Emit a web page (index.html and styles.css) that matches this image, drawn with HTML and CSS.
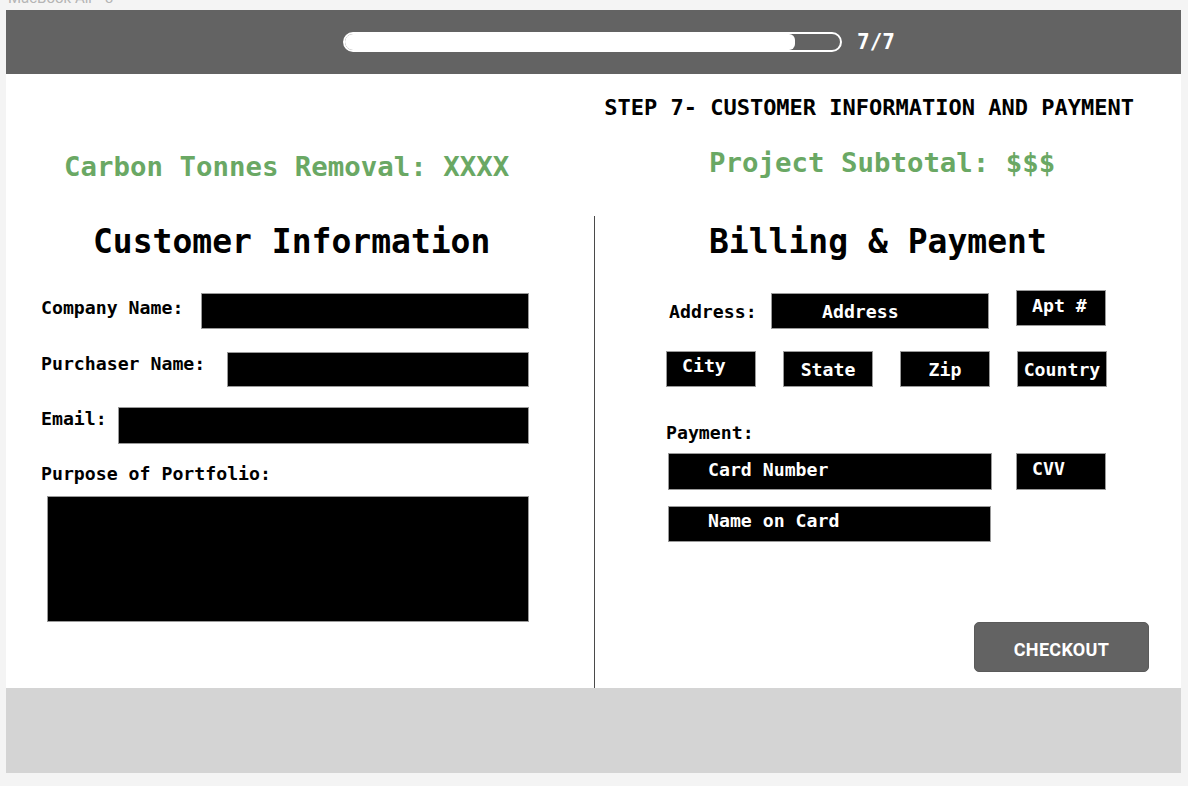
FILE: index.html
```html
<!DOCTYPE html>
<html lang="en">
<head>
<meta charset="utf-8">
<title>Step 7 - Customer Information and Payment</title>
<link rel="stylesheet" href="styles.css">
</head>
<body>
  <div class="frame-label"><span>MacBook Air - 3</span></div>
  <div class="frame">
    <header class="topbar">
      <div class="progress">
        <div class="progress-track"><div class="progress-fill"></div></div>
        <span class="progress-count">7/7</span>
      </div>
    </header>

    <main class="main">
      <h1 class="step-title">STEP 7- CUSTOMER INFORMATION AND PAYMENT</h1>
      <div class="cols">
        <div class="summary summary--left">Carbon Tonnes Removal: XXXX</div>
        <div class="summary summary--right">Project Subtotal: $$$</div>

        <section class="panel panel--customer">
          <h2 class="panel-title">Customer Information</h2>
          <div class="field field--company">
            <span class="label">Company Name:</span>
            <div class="box box--wide"></div>
          </div>
          <div class="field field--purchaser">
            <span class="label">Purchaser Name:</span>
            <div class="box box--wide"></div>
          </div>
          <div class="field field--email">
            <span class="label">Email:</span>
            <div class="box box--wide"></div>
          </div>
          <div class="label label--block">Purpose of Portfolio:</div>
          <div class="box box--area"></div>
        </section>

        <section class="panel panel--billing">
          <h2 class="panel-title">Billing &amp; Payment</h2>
          <div class="addr-row">
            <span class="label label--addr">Address:</span>
            <div class="box box--address">Address</div>
            <div class="box box--small box--top">Apt #</div>
          </div>
          <div class="loc-row">
            <div class="box box--small box--top">City</div>
            <div class="box box--small box--center">State</div>
            <div class="box box--small box--center">Zip</div>
            <div class="box box--small box--center">Country</div>
          </div>
          <div class="label label--payment">Payment:</div>
          <div class="card-row">
            <div class="box box--card">Card Number</div>
            <div class="box box--small box--top box--cvv">CVV</div>
          </div>
          <div class="box box--card box--name">Name on Card</div>
          <button class="checkout" type="button">CHECKOUT</button>
        </section>
      </div>
    </main>

    <footer class="footer"></footer>
  </div>
</body>
</html>
```

FILE: styles.css
```css
* { box-sizing: border-box; }

html, body {
  margin: 0;
  padding: 0;
}

body {
  background: #f4f4f4;
  font-family: "DejaVu Sans Mono", "Liberation Mono", monospace;
  color: #000;
  width: 1188px;
  height: 786px;
  overflow: hidden;
}

.frame-label {
  height: 10px;
  overflow: hidden;
  padding-left: 8px;
  color: #b5b5b5;
  font-family: "Roboto", "Liberation Sans", sans-serif;
  font-size: 15px;
  line-height: 15px;
}

.frame-label span {
  display: block;
  margin-top: -9px;
}

.frame {
  margin-left: 6px;
  width: 1175px;
  display: flex;
  flex-direction: column;
}

/* top bar */
.topbar {
  height: 64px;
  background: #636363;
  display: flex;
  align-items: center;
  padding-left: 337px;
}

.progress {
  display: flex;
  align-items: center;
  gap: 15px;
}

.progress-track {
  width: 499px;
  height: 20px;
  border: 2px solid #fff;
  border-radius: 10px;
  overflow: hidden;
}

.progress-fill {
  width: 91%;
  height: 100%;
  background: #fff;
  border-radius: 0 6px 6px 0;
}

.progress-count {
  color: #fff;
  font-weight: bold;
  font-size: 21px;
  line-height: 24px;
  letter-spacing: 0;
}

/* main */
.main {
  height: 614px;
  background: #fff;
  display: flex;
  flex-direction: column;
}

.step-title {
  margin: 21px 47px 0 0;
  text-align: right;
  font-size: 22px;
  line-height: 26px;
  font-weight: bold;
}

.cols {
  flex: 1;
  display: grid;
  grid-template-columns: 588px 1fr;
  grid-template-rows: 95px 1fr;
}

.summary {
  color: #6aa864;
  font-weight: bold;
  font-size: 27.4px;
  line-height: 34px;
}

.summary--left {
  padding: 29px 0 0 58px;
}

.summary--right {
  padding: 25px 0 0 115px;
}

.panel {
  display: flex;
  flex-direction: column;
  align-items: flex-start;
}

.panel-title {
  margin: 6px 0 0;
  font-size: 33px;
  line-height: 40px;
  font-weight: bold;
}

.label {
  font-weight: bold;
  font-size: 18.2px;
  line-height: 22px;
  white-space: nowrap;
}

.box {
  background: #000;
  border: 1px solid #9a9a9a;
  color: #fff;
  font-weight: bold;
  font-size: 18.2px;
  line-height: 22px;
  white-space: nowrap;
}

/* customer panel */
.panel--customer {
  padding: 0 65px 0 35px;
}

.panel--customer .panel-title {
  margin-left: 52px;
  margin-bottom: 31px;
}

.field {
  display: flex;
  align-items: flex-start;
  width: 100%;
}

.field .label {
  padding-top: 4px;
}

.box--wide {
  flex: 1;
  height: 36px;
}

.field--company .box { margin-left: 18px; }

.field--purchaser { margin-top: 23px; }
.field--purchaser .label { padding-top: 1px; }
.field--purchaser .box { margin-left: 22px; height: 35px; }

.field--email { margin-top: 20px; }
.field--email .label { padding-top: 1px; }
.field--email .box { margin-left: 11px; height: 37px; }

.label--block {
  margin-top: 19px;
}

.box--area {
  margin: 11px 0 0 6px;
  width: 482px;
  height: 126px;
}

/* billing panel */
.panel--billing {
  border-left: 1.5px solid #4a4a4a;
  padding-left: 71px;
}

.panel--billing .panel-title {
  margin-left: 43px;
  margin-bottom: 28px;
}

.addr-row {
  display: flex;
  align-items: flex-start;
}

.label--addr {
  margin: 11px 0 0 3px;
  width: 102px;
}

.box--address {
  margin-top: 3px;
  width: 218px;
  height: 36px;
  display: flex;
  align-items: center;
  padding: 2px 0 0 50px;
}

.box--small {
  width: 90px;
  height: 36px;
}

.addr-row .box--small {
  margin-left: 27px;
}

.box--top {
  padding: 4px 0 0 15px;
}

.box--center {
  display: flex;
  align-items: center;
  justify-content: center;
  padding-top: 1px;
}

.loc-row {
  margin-top: 22px;
  display: flex;
  gap: 27px;
}

.loc-row .box--top {
  padding-top: 3px;
}

.label--payment {
  margin-top: 35px;
}

.card-row {
  margin-top: 9px;
  display: flex;
  align-items: flex-start;
}

.box--card {
  margin-left: 2px;
  width: 324px;
  height: 37px;
  padding: 5px 0 0 39px;
}

.box--cvv {
  margin-left: 24px;
  height: 37px;
}

.box--name {
  margin-top: 16px;
  width: 323px;
  height: 36px;
  padding-top: 3px;
}

.checkout {
  margin: auto 32px 16px 0;
  align-self: flex-end;
  width: 175px;
  height: 50px;
  background: #636363;
  color: #fff;
  border: 1px solid #5a5a5a;
  border-radius: 5px;
  font-family: "Roboto", "DejaVu Sans", sans-serif;
  font-weight: bold;
  font-size: 18px;
  letter-spacing: 0.3px;
  padding: 4px 0 0;
  cursor: pointer;
}

/* footer */
.footer {
  height: 85px;
  background: #d4d4d4;
}
```
